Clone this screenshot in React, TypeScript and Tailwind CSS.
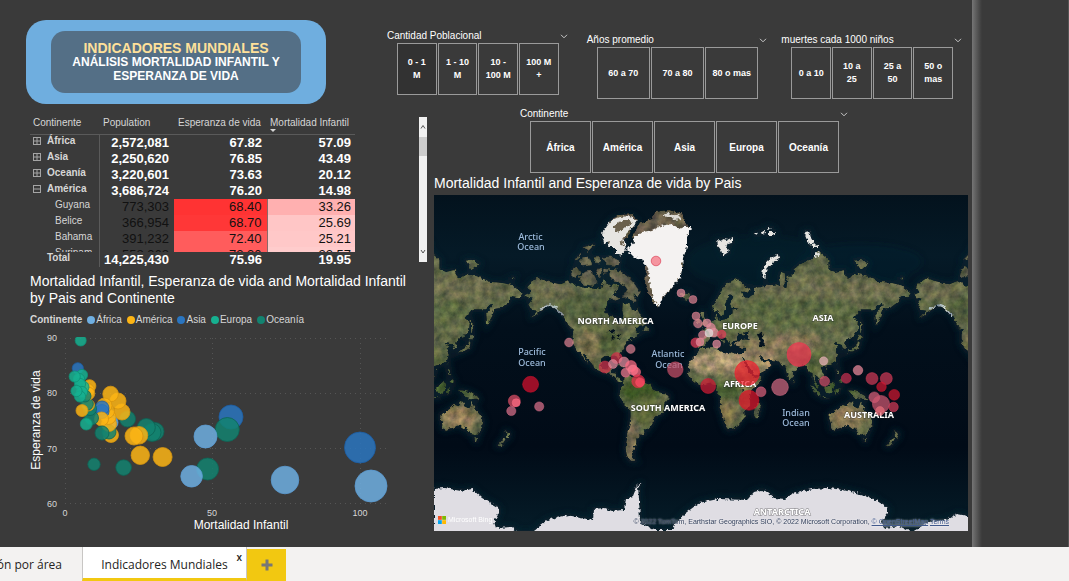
import React from 'react';

const arial = "font-['Liberation_Sans',Arial,sans-serif]";

/* ---------- slicers ---------- */

function Chevron() {
  return (
    <svg viewBox="0 0 8 5" className="h-[5px] w-2" fill="none" stroke="#c8c8c8" strokeWidth="1">
      <path d="M1 0.8 L4 3.8 L7 0.8" />
    </svg>
  );
}

type SlicerProps = { title: string; options: string[]; big?: boolean; activeFirst?: boolean };

function Slicer({ title, options, big, activeFirst }: SlicerProps) {
  return (
    <section aria-label={title}>
      <header className="flex h-[14px] items-center justify-between text-[10px] leading-3 text-white">
        <h2>{title}</h2>
        <button type="button" aria-label={`Opciones de ${title}`} className="pt-px">
          <Chevron />
        </button>
      </header>
      <div className={`flex gap-px pl-[10px] pr-[9px] ${big ? 'text-[10px]' : 'text-[9px]'}`}>
        {options.map((o, i) => (
          <button
            key={o}
            type="button"
            className={`h-[52px] flex-1 basis-0 whitespace-pre-line border border-[#9a9a9a] font-bold leading-[13px] text-white ${
              activeFirst && i === 0 ? 'bg-[#323232]' : ''
            }`}
          >
            {o}
          </button>
        ))}
      </div>
    </section>
  );
}

/* ---------- matrix ---------- */

const groups = [
  ['África', '2,572,081', '67.82', '57.09', '+'],
  ['Asia', '2,250,620', '76.85', '43.49', '+'],
  ['Oceanía', '3,220,601', '73.63', '20.12', '+'],
  ['América', '3,686,724', '76.20', '14.98', '-'],
];
const countries = [
  ['Guyana', '773,303', '68.40', '33.26', 'bg-[#ff3333]', 'bg-[#ffb0b0]'],
  ['Belice', '366,954', '68.70', '25.69', 'bg-[#ff3737]', 'bg-[#ffc6c6]'],
  ['Bahama', '391,232', '72.40', '25.21', 'bg-[#ff5c5c]', 'bg-[#ffc8c8]'],
  ['Surinam', '558,368', '72.30', '22.57', 'bg-[#ff5c5c]', 'bg-[#ffcccc]'],
];

function Expander({ open }: { open: boolean }) {
  return (
    <svg viewBox="0 0 8 8" className="h-2 w-2" fill="none" stroke="#a5a5a5" strokeWidth="1">
      <rect x="0.5" y="0.5" width="7" height="7" />
      <path d={open ? 'M1 4h6' : 'M1 4h6M4 1v6'} />
    </svg>
  );
}

function Matrix() {
  return (
    <div className="flex items-start justify-between">
      <table className="w-[325px] table-fixed border-collapse text-[#d6d6d6]">
        <colgroup>
          <col className="w-[69px]" />
          <col className="w-[75px]" />
          <col className="w-[93px]" />
          <col className="w-[88px]" />
        </colgroup>
        <thead>
          <tr className="border-b border-[#5a5a5a] text-left text-[10px] leading-3">
            <th className="h-[17px] p-0 pl-[3px] align-top font-normal">Continente</th>
            <th className="p-0 pl-1 align-top font-normal">Population</th>
            <th className="whitespace-nowrap p-0 pl-1 align-top font-normal">Esperanza de vida</th>
            <th className="whitespace-nowrap p-0 pl-[3px] align-top font-normal">
              <div className="h-[17px]">
                Mortalidad Infantil
                <svg viewBox="0 0 6 3" className="h-[3px] w-[6px]">
                  <path d="M0 0h6L3 3z" fill="#d6d6d6" />
                </svg>
              </div>
            </th>
          </tr>
        </thead>
        <tbody>
          {groups.map((g) => (
            <tr key={g[0]} className="text-right text-[13px] font-bold leading-4 text-white">
              <th className="border-r border-[#5a5a5a] p-0">
                <div className="flex h-4 items-center gap-[6px] pb-1 pl-[3px] text-[10px] leading-3 text-[#d6d6d6]">
                  <button type="button" aria-label={`Expandir ${g[0]}`}>
                    <Expander open={g[4] === '-'} />
                  </button>
                  {g[0]}
                </div>
              </th>
              <td className="p-0 pr-[5px]">{g[1]}</td>
              <td className="p-0 pr-[5px]">{g[2]}</td>
              <td className="p-0 pr-1">{g[3]}</td>
            </tr>
          ))}
          {countries.map((c, i) => {
            const h = i === 3 ? 'h-[5px]' : 'h-4';
            return (
              <tr key={c[0]} className="text-right text-[13px] leading-4 text-[#111111]">
                <th className="border-r border-[#5a5a5a] p-0 text-left text-[10px] font-normal leading-3 text-[#d6d6d6]">
                  <div className={`${h} overflow-hidden pl-[25px]`}>{c[0]}</div>
                </th>
                <td className="p-0">
                  <div className={`${h} overflow-hidden pr-[5px]`}>{c[1]}</div>
                </td>
                <td className={`p-0 ${c[4]}`}>
                  <div className={`${h} overflow-hidden pr-[5px]`}>{c[2]}</div>
                </td>
                <td className={`border-l border-[#8a6a6a] p-0 ${c[5]}`}>
                  <div className={`${h} overflow-hidden pr-1`}>{c[3]}</div>
                </td>
              </tr>
            );
          })}
        </tbody>
        <tfoot>
          <tr className="text-right text-[13px] font-bold leading-[15px] text-white">
            <th className="border-r border-[#5a5a5a] p-0 text-left text-[10px] leading-3 text-[#d6d6d6]">
              <div className="h-[15px] pl-[17px]">Total</div>
            </th>
            <td className="p-0 pr-[5px]">14,225,430</td>
            <td className="p-0 pr-[5px]">75.96</td>
            <td className="p-0 pr-1">19.95</td>
          </tr>
        </tfoot>
      </table>
      <div className="flex h-[145px] w-2 flex-col items-center bg-[#f1f1f1]">
        <svg viewBox="0 0 8 20" className="h-5 w-2" fill="none" stroke="#555555">
          <path d="M2 11.5L4 8.5L6 11.5" />
        </svg>
        <div className="h-[19px] w-full bg-[#cdcdcd]" />
        <div className="flex-1" />
        <svg viewBox="0 0 8 16" className="h-4 w-2" fill="none" stroke="#555555">
          <path d="M2 4L4 7L6 4" />
        </svg>
      </div>
    </div>
  );
}

/* ---------- scatter ---------- */

const palette: Record<string, [string, string]> = {
  f: ['#6fafe2', '#5a9ad2'],
  a: ['#fdb515', '#d8960f'],
  s: ['#2a75c0', '#1c5da3'],
  e: ['#16b090', '#0f8f75'],
  o: ['#138370', '#0c6455'],
};
const legend: [string, string][] = [
  ['África', 'f'],
  ['América', 'a'],
  ['Asia', 's'],
  ['Europa', 'e'],
  ['Oceanía', 'o'],
];

/* kind, x, y, radius */
const points: [string, number, number, number][] = [
  ['s', 231, 417, 12], ['s', 360, 447.5, 15.5], ['o', 227.3, 429.5, 12], ['f', 205.5, 436.5, 11.5],
  ['o', 207.6, 469, 11], ['f', 191.6, 476.3, 10.8], ['f', 285, 480, 13.8], ['f', 371, 486, 16],
  ['a', 162.6, 457, 9.5], ['a', 140.3, 455.3, 9.2], ['o', 94, 464.3, 6.2], ['o', 123.6, 467.6, 7.8],
  ['o', 155, 431.5, 9], ['o', 152, 432.5, 9], ['o', 146.3, 427.5, 9], ['a', 139, 435.3, 8.8],
  ['a', 134, 436, 9], ['o', 127.5, 419, 8], ['a', 122, 412, 8], ['a', 118, 401, 8], ['a', 110.6, 394, 7.8],
  ['a', 111, 435, 7.5], ['f', 111, 422.5, 7], ['o', 109, 432, 7], ['a', 109, 424, 7.5], ['a', 108.5, 417, 7.5],
  ['a', 107, 411, 7.5], ['a', 104.5, 405.5, 7.5], ['s', 102, 411.5, 7], ['s', 102, 408, 7], ['a', 101.5, 419, 7],
  ['o', 102, 433, 7], ['o', 91.5, 418, 7], ['o', 90, 409, 6.5], ['a', 88.5, 405, 6], ['o', 87, 404, 6.3],
  ['a', 82, 410.6, 6], ['a', 89.6, 386, 6.3], ['a', 88, 390, 6.3], ['a', 88.5, 393.5, 6.3], ['o', 85, 396, 6],
  ['e', 86.3, 424, 6], ['s', 77.8, 368.3, 5.6], ['e', 82, 375, 5.6], ['e', 79, 379, 5.6], ['e', 83, 387, 6],
  ['e', 80, 384, 5.6], ['e', 82, 392, 5.6], ['e', 80, 396.5, 5.6], ['e', 76.5, 391, 5.6], ['e', 74.7, 376.5, 5.6],
];

function Scatter() {
  return (
    <section className="pt-[6px]">
      <h2 className="w-[390px] text-[14px] leading-[17px] text-white">
        Mortalidad Infantil, Esperanza de vida and Mortalidad Infantil by Pais and Continente
      </h2>
      <ul className="flex items-center gap-[5px] pt-[7px] text-[10px] leading-3 text-[#d6d6d6]">
        <li className="font-bold">Continente</li>
        {legend.map(([name, key]) => (
          <li key={name} className="flex items-center gap-px">
            <svg viewBox="0 0 8 8" className="h-2 w-2">
              <circle cx="4" cy="4" r="4" fill={palette[key][0]} />
            </svg>
            {name}
          </li>
        ))}
      </ul>
      <svg
        viewBox="30 326 390 208"
        className="h-[208px] w-[390px]"
        fontFamily="'Liberation Sans', Arial, sans-serif"
        role="img"
        aria-label="Esperanza de vida y mortalidad infantil"
      >
        <defs>
          <clipPath id="plot">
            <rect x="60" y="337" width="360" height="170" />
          </clipPath>
        </defs>
        <g stroke="#555555" strokeDasharray="1 4">
          {[338, 393, 448, 503].map((y) => (
            <path key={y} d={`M65 ${y + 0.5}H390`} />
          ))}
          {[65, 212, 360].map((x) => (
            <path key={x} d={`M${x + 0.5} 338V503`} />
          ))}
        </g>
        <g fontSize="9" fill="#d6d6d6">
          <g textAnchor="end">
            <text x="57" y="341">90</text>
            <text x="57" y="396">80</text>
            <text x="57" y="452">70</text>
            <text x="57" y="507">60</text>
          </g>
          <g textAnchor="middle">
            <text x="65" y="516">0</text>
            <text x="212" y="516">50</text>
            <text x="360" y="516">100</text>
          </g>
        </g>
        <g fontSize="12" fill="#ffffff" textAnchor="middle">
          <text x="241" y="529">Mortalidad Infantil</text>
          <text transform="translate(40 420) rotate(-90)">Esperanza de vida</text>
        </g>
        <g clipPath="url(#plot)" fillOpacity="0.85">
          {points.map(([k, x, y, r], i) => (
            <circle key={i} cx={x} cy={y} r={r} fill={palette[k][0]} stroke={palette[k][1]} strokeWidth="0.8" />
          ))}
          <circle cx="80.7" cy="340.5" r="5.5" fill={palette.e[0]} stroke={palette.e[1]} strokeWidth="0.8" />
        </g>
      </svg>
    </section>
  );
}

/* ---------- map ---------- */

const WORLD = 389;

/* Mercator projection of "lon,lat lon,lat ..." to a closed path */
function outline(coords: string) {
  return (
    coords
      .trim()
      .split(/\s+/)
      .map((pair, i) => {
        const [lon, lat] = pair.split(',').map(Number);
        const x = 706.5 + (WORLD / 360) * lon;
        const y = 389.5 - (WORLD / (2 * Math.PI)) * Math.log(Math.tan(Math.PI / 4 + (lat * Math.PI) / 360));
        return `${i ? 'L' : 'M'}${x.toFixed(1)} ${y.toFixed(1)}`;
      })
      .join('') + 'Z'
  );
}

const land = [
  // North America
  '-168,65.6 -163,66.5 -166,68.3 -162,70 -156,71.3 -150,70.5 -141,69.7 -135,69.3 -128,70.3 -124,69.6 -115,68.3 -108,68 -102,67.7 -97,68.3 -95,71.5 -92,69.5 -88,68.5 -85,69.5 -81,69 -82,67 -86,66.5 -87,64.5 -93,62 -94.5,59 -92,57 -85,55.3 -82,53 -80,51.3 -79,53 -77,56 -78,59 -77.5,62.3 -73,62 -70,61 -69,58.8 -66,59 -64,60.3 -62,57 -58,54.8 -56,52 -60,50.2 -66,50 -64,48.5 -65,46 -61,46 -66,43.5 -70,43.5 -70,41.7 -74,40.5 -76,37 -76,35 -81,31.5 -80,26 -81,25.2 -83,29 -85,29.8 -90,29.5 -94,29.5 -97.3,27.5 -97.8,22.5 -95.8,18.7 -92,18.5 -90.5,21 -87,21.5 -88.5,16 -84,15.8 -83.3,11 -79.5,9.4 -77.3,8 -80,7.5 -83,8.5 -86,11.5 -88,13 -94,16 -97,15.8 -102,18 -105.5,20.3 -106,23 -109,26 -113,31.3 -114.5,31 -110,24 -109.8,23 -112,25.5 -115,29 -117,32.5 -120.5,34.5 -124,40 -124,46 -123,48.5 -128,51 -131,55 -136,58.5 -141,60 -147,61 -151,59.5 -154,58.5 -158,56.5 -164,54.6 -160,56.5 -157,58.7 -162,59 -165,61.5 -161,64 -166,64.5',
  // South America
  '-77.3,8 -75,10.7 -71.7,12.3 -68,10.8 -62,10.6 -57,6 -51.5,4 -50,0 -44,-2.5 -39,-3.5 -35,-6 -35,-9 -39,-13 -39,-18 -41,-22 -45,-23.5 -48.5,-26 -48.8,-28.5 -52,-33 -54,-35 -58,-34.5 -57,-38 -62,-39 -62.5,-41 -65,-41 -65,-45 -67.5,-46 -66,-48 -69,-51 -68,-53 -65,-55 -70,-55 -74,-52 -75,-47 -73.5,-42 -73.5,-37 -71.5,-32 -70.3,-24 -70.4,-18.3 -76,-14 -79.5,-8 -81.3,-5 -80,-3 -80,1 -77.5,4 -77.5,7',
  // Africa, Madagascar
  '-6,35.8 0,36 10,37.2 11,34 15,32.3 20,31 22,32.8 29,31 32.5,31.2 32.5,29.9 35.5,24 37.3,20 39,16 43,12 44,10.5 51,12 50,8 46,3 41,-2 39,-6 40.5,-11 40.5,-15 35,-20 35.5,-24 32.7,-27 30,-31 25.5,-34 20,-34.8 18.3,-33 16,-28 14.5,-22 12,-17 13.5,-11 12,-5 9,-1 9.5,4 5,4.5 4,6.3 -2,5 -7.5,4.4 -13,8.5 -16.5,12.5 -17.3,14.8 -16,19 -16.8,22 -13,27.5 -9.7,30 -9,33',
  '49.3,-12 50.3,-15.5 47.5,-24.5 45,-25.5 43.5,-22 44.3,-17',
  // Eurasia
  '-9,37 -9,43.3 -1.5,43.5 -1.5,46.5 -4.5,48.3 1.5,50.2 4.5,53 8.5,54 8.3,57 10.5,57.5 10.5,54.3 14,54 19,54.5 21,57 24,57.3 24,59.3 30,60 23,60 21.5,61.5 25,65 22,65.7 17.5,62 18.5,60 16.5,57 14,55.4 12.5,56.5 11,59 7,58 5,61 10,64 14.5,68 20,70 28,71 33,69.5 41,67.3 39,66.2 33,66.8 35,64.5 38,64.5 40.5,65 44,66 43.5,68.5 46,68 53,68.5 60,69 65,69.2 68.5,68.5 67,71 69,73 73,72.5 72,68 74,68 75,72 81,72 80.5,73.7 87,75 98,76.3 104,77.7 113,76 113,73.7 119,73 127,73.5 130,71 139,72.5 150,71.5 160,70 170,69.8 180,69 190,66 187,64.5 180,65 177,62.5 170,60 163.5,59.5 162,56 157,51 156,57 163,61.8 160,61.5 155,59.3 143,59.3 136,55 141,53 140.5,48 135,43.5 130,42.5 127.5,39.5 129.5,36 126.5,34.5 125,38 121.5,39 121,40.8 118,39 122.3,37 119.5,35 121.8,31 120,26 114,22.3 108.5,21.5 106,19 109,13 108,11 105,9 102.5,12 100.5,13.3 99.5,10 103.5,3 103.5,1.4 101,3 98.3,8.5 98,15 94.5,16 92,22 87,21.3 80.3,15.5 80,11 77.5,8 74,15 72.7,21 70,21 67,25 61,25.2 57,26.5 51,28 48,30 50,27 51.5,25 54,24.2 56.3,26 59.8,22.5 55,17.5 52,16 45,12.8 43,14 42.5,16.5 39,21 35,28 32.5,30 32.5,31.2 34.3,31.3 35.8,36 30.5,36.3 27.3,37 26.3,40 29,41.2 35,42 41,41.5 38,44.5 39,47 35,46.3 36,45 33.5,44.5 33,46 30.5,46.3 28,43.5 28.5,41.3 24,40.7 23,39 24,38 22.5,36.5 19.5,41 13.8,45 12.3,45 13,43 18.3,40 16,38 15.5,40 10.5,43.5 4,43.5 3,42 0,39.5 -1,37.5 -5.5,36',
  // British Isles, Iceland
  '-5.5,50 1,51 1.5,52.8 -2,55.5 -2,57.5 -4,58.6 -6,57 -3,54 -5,52',
  '-10,52 -6,52.3 -6,54.5 -8,55.2 -10,54',
  '-24,65.5 -22,66.4 -16,66.3 -14,65 -18,63.5 -22,64',
  // Japan, Sakhalin, Taiwan, Hainan
  '130,31.5 131.5,34 136,35.7 139.5,38.5 140,41.3 142,39.5 140.5,35.5 136,33.6 132,32.5',
  '140,42 141.7,45.4 145,43.5 143,42',
  '142,46 142,54 143.3,53 144,49 143,46.5',
  '120.2,23 121.5,25 120.9,22',
  '108.7,19 110.8,20 110,18.4',
  // Maritime South-East Asia
  '95.5,5.5 98,4 104,-2 106,-5.8 102,-4.5 98.5,1.5',
  '109,1.5 113,3.2 117,7 119,5 117.5,1 116,-4 110.5,-3',
  '105.5,-6.5 110,-6.8 114.5,-8.2 108,-7.7',
  '119,-5.3 119.5,0.5 124.8,1.3 121,0.2 123,-1 121.5,-3 122.5,-5.3 120.5,-3',
  '131,-0.8 134,-1 137.5,-1.6 141,-2.6 147,-6 150.5,-10.5 146,-8.5 142.5,-9.2 138,-8 134,-4',
  '120.5,18.3 122.2,18.3 121.7,14.5 124,12.8 120.7,13.7',
  '122,7 125,9.5 126.5,7.5 125.3,6',
  '80,9.6 81.8,7.3 80.3,6',
  // Australia, Tasmania, New Zealand
  '114,-22 117,-20.6 122,-18 126,-14 129,-15 132,-11.5 136.7,-12.2 135.5,-15 140.5,-17.5 142.5,-11 145.5,-15 147,-19.3 151,-23.5 153.5,-28 152.5,-32.5 150,-37.3 146.5,-39 140.5,-38 138,-34.5 137.5,-33 135.5,-34.7 131,-31.5 124,-33.5 118,-35 115,-34 115.5,-31 113.5,-26',
  '145,-40.8 148.2,-41 147,-43.6 145.7,-43',
  '173,-34.5 175.5,-36.5 178.5,-37.8 176.5,-41.3 174,-39.5 174.7,-37.5',
  '172.7,-40.6 174.2,-41.7 170.8,-45.8 168.5,-46.6 166.5,-46',
  // Caribbean, Newfoundland
  '-84.5,22.3 -82,23.1 -77,21.5 -74.3,20.2 -77.5,19.9 -80,21.5',
  '-74.3,18.5 -73,19.9 -68.5,18.8 -70,18.3',
  '-59,47.7 -55.7,51.5 -53,47.5',
  '-128,50.7 -123.5,48.4 -126,49',
  // Siberian islands
  '179,71.2 182,71.5 181,70.9',
  '137,75.8 143,76 150,75.1 143,73.4',
].map(outline);

const tundra = [
  // Canadian Arctic
  '-124,73.5 -120,74.4 -116,72.8 -121,71.3 -125,72',
  '-118,71.5 -112,73 -106,73.2 -101,70 -104,68.8 -115,69.3',
  '-90,73.7 -84,73.6 -78,72.8 -72,71.3 -67,69.5 -62,66.7 -64,65 -68,66.3 -65,63 -68,62.7 -74,64.6 -78,64.5 -73,67.5 -76,69 -81,70 -89,71',
  '-100,73.8 -97,74 -98,71.4 -102,72.3',
  '-95,74 -90.5,73.9 -92,72.7 -95.5,72.5',
  '-117,76 -109,76.7 -106,75 -115,74.7',
  '-103,76.5 -99,76.5 -98,75.2 -104,75.3',
  '-97,76.5 -88,76.6 -80,75.6 -82,74.6 -92,74.8',
  '-87,65.7 -81,64 -84,62.8 -87,63.8',
  '-122,76 -116,77.4 -119,75.8',
  '-114,78.5 -104,79 -110,77.7',
].map(outline);

const snow = [
  // Ellesmere and Axel Heiberg
  'M602 234L607 226L612 220L619 217L631 216L637 221L633 227L628 231L624 238L626 249L620 256L616 254L616 247L608 247L610 241L604 243Z',
  // Svalbard
  'M717 240L721 242L723 239L727 240L733 237L733 242L728 243L726 247L730 251L727 253L723 256L721 250L718 246Z',
  // Franz Josef Land
  'M755 233L758 234L756 236ZM761 231L765 230L766 233L762 234ZM768 227L771 228L768 230ZM769 232L775 232L773 235L769 235Z',
  // Severnaya Zemlya
  'M804 232L809 231L811 238L814 243L810 245L807 239ZM812 245L818 244L818 248L813 248ZM815 253L819 251L820 255L815 257Z',
  // Novaya Zemlya
  'M778 255L779 258L772 263L767 269L765 274L766 279L762 276L763 269L767 262L773 257Z',
];

const lakes = [
  '47,45 51,47 53,45 51,43 54,41 53.5,37 49,37.5 49,41',
  '-92,46.7 -87,48.8 -84.5,46.5 -88,46.8',
  '-88,42 -87,45.5 -85,45.5 -86.5,42',
  '-84,46 -80,45 -82,43.3',
  '-83,41.7 -79,42.8 -81,41.6',
  '32,0.3 34,0.3 33,-2.5',
  '-98,53.8 -97,51 -98.5,52',
].map(outline);

const ice =
  'M434 489L445 488L461 491L472 489L482 498L499 508L499 513L494 522L496 528L512 527L518 532L533 532L547 520L568 515L580 518L593 520L594 509L604 508L612 511L624 510L626 499L632 497L636 487L642 482L638 488L639 498L640 522L654 530L671 530L683 515L699 503L718 499L747 500L754 492L762 490L768 492L775 498L785 499L792 494L812 489L829 488L843 490L860 494L874 499L888 508L888 513L881 522L884 528L900 526L912 532L929 522L946 520L957 514L968 516V540H434Z';

/* x, y, rx, ry, colour */
const climate: [number, number, number, number, string][] = [
  [722, 362, 38, 12, '#ab9873'], [762, 360, 16, 13, '#a08c68'], [765, 346, 34, 8, '#8c7f5c'],
  [795, 342, 26, 8, '#927f5b'], [722, 391, 20, 9, '#4a6031'], [640, 391, 20, 12, '#3f5a28'],
  [645, 410, 12, 16, '#5f6b3a'], [633, 440, 6, 20, '#84745a'], [588, 346, 12, 16, '#7e7450'],
  [609, 342, 10, 14, '#55633a'], [848, 417, 18, 12, '#95805a'], [724, 413, 12, 12, '#877850'],
  [590, 308, 34, 13, '#57633f'], [800, 312, 58, 16, '#616e44'], [830, 288, 80, 12, '#6e7050'],
  [818, 362, 14, 12, '#5f6c40'], [552, 290, 22, 8, '#6e6e50'], [836, 388, 26, 10, '#466033'],
  [748, 388, 8, 14, '#76734a'], [732, 325, 20, 8, '#5f6d43'],
];

/* x, y, radius, fill */
const bubbles: [number, number, number, string][] = [
  [656, 261, 4.8, '#f5707f'], [681, 293, 4, '#e58c9c'], [693, 299.5, 4, '#d9808f'],
  [696, 316, 4, '#d9808f'], [698, 323.5, 4.4, '#d9808f'], [695.7, 342.7, 4.8, '#e8405a'],
  [700, 342, 4, '#e58c9c'], [702.7, 335, 4.2, '#d9808f'], [707, 323, 4, '#e58c9c'], [711, 327.7, 4.4, '#e58c9c'],
  [714, 332.7, 4.4, '#e58c9c'], [709, 333, 4, '#e0dcdc'], [721.7, 334.3, 4.2, '#e04058'],
  [716.7, 344, 4, '#e58c9c'], [569, 342.5, 4.4, '#d9808f'], [630.7, 349, 4.4, '#d9808f'],
  [616.7, 358, 5.5, '#d2304a'], [605, 367, 6, '#d2304a'], [613, 364, 4.5, '#e58c9c'], [624, 362, 5, '#e58c9c'],
  [631, 366, 5.5, '#ff6c84'], [633, 370, 5, '#ff7c92'], [636, 372, 4.6, '#ff6c84'], [625.6, 372.7, 4.5, '#f27c90'],
  [638.3, 381.3, 6.5, '#e8304a'], [640, 382.3, 4.4, '#ff4c68'], [675.3, 369.6, 7.8, '#c85068'],
  [530.6, 384.3, 8, '#d8102e'], [514.3, 401, 6, '#e05068'], [516.2, 402.7, 4, '#ff6c84'],
  [511.3, 411, 4.6, '#d9708a'], [539.2, 406.5, 4.6, '#d9708a'], [708.2, 386, 7.5, '#d01c34'],
  [747.2, 373, 12.4, '#f0202e'], [749, 400.3, 10, '#e01428'], [761, 391.8, 5, '#d9607a'],
  [780, 387.2, 8.4, '#cf6880'], [799, 354.5, 12, '#f03550'], [823.7, 361, 4.2, '#e8b0b8'],
  [824.6, 381.3, 5, '#d05068'], [846.3, 378.3, 5, '#c83050'], [858, 370.3, 4.8, '#ef8c9c'],
  [872, 378.6, 6, '#d03a56'], [886.3, 378.6, 6, '#d03a56'], [881.5, 386.8, 4.8, '#d01830'],
  [894.2, 394.8, 5.4, '#d01830'], [874.3, 397.3, 5.4, '#d9607a'], [881, 404, 8.6, '#cf5870'],
  [893.5, 407, 4.8, '#d03a56'], [880, 411, 4.4, '#e9707c'],
];

const copies = [-WORLD, 0, WORLD];

function WorldMap() {
  return (
    <div className="relative">
      <svg
        viewBox="434 195 534 336"
        className="block h-auto w-full"
        role="img"
        aria-label="Mortalidad Infantil and Esperanza de vida by Pais"
      >
        <defs>
          <linearGradient id="sea" x1="0" y1="0" x2="0" y2="1">
            <stop offset="0" stopColor="#03121d" />
            <stop offset="0.18" stopColor="#051a27" />
            <stop offset="0.4" stopColor="#020f1b" />
            <stop offset="0.75" stopColor="#010b17" />
            <stop offset="1" stopColor="#051c28" />
          </linearGradient>
          <filter id="soft" x="-20%" y="-20%" width="140%" height="140%">
            <feGaussianBlur stdDeviation="3" />
          </filter>
          <filter id="terrain" filterUnits="userSpaceOnUse" x="434" y="195" width="534" height="336" colorInterpolationFilters="sRGB">
            <feTurbulence type="fractalNoise" baseFrequency="0.25" numOctaves="2" seed="4" result="edge" />
            <feDisplacementMap in="SourceGraphic" in2="edge" scale="4" xChannelSelector="R" yChannelSelector="G" result="shape" />
            <feTurbulence type="fractalNoise" baseFrequency="0.12" numOctaves="4" seed="9" />
            <feColorMatrix values="1 0 0 0 0  0.8 0.2 0 0 0  0.7 0 0.3 0 0  0 0 0 0 1" result="grain" />
            <feComposite in="shape" in2="grain" operator="arithmetic" k1="0.9" k2="0.5" result="lit" />
            <feComposite in="lit" in2="shape" operator="in" />
          </filter>
          <filter id="rough" filterUnits="userSpaceOnUse" x="434" y="195" width="534" height="345" colorInterpolationFilters="sRGB">
            <feTurbulence type="fractalNoise" baseFrequency="0.3" numOctaves="2" seed="7" />
            <feDisplacementMap in="SourceGraphic" scale="5" xChannelSelector="R" yChannelSelector="G" />
          </filter>
          <clipPath id="coast">
            {land.map((d, i) => (
              <path key={i} d={d} />
            ))}
          </clipPath>
          <g id="shelf">
            {[...land, ...tundra, ...snow].map((d, i) => (
              <path key={i} d={d} />
            ))}
          </g>
          <g id="ground">
            <g fill="#666e4b">
              {land.map((d, i) => (
                <path key={i} d={d} />
              ))}
            </g>
            <g clipPath="url(#coast)">
              <g filter="url(#soft)">
                {climate.map(([x, y, rx, ry, fill], i) => (
                  <ellipse key={i} cx={x} cy={y} rx={rx} ry={ry} fill={fill} />
                ))}
              </g>
            </g>
            <g fill="#66664f" stroke="#66664f" strokeWidth="0.8">
              {tundra.map((d, i) => (
                <path key={i} d={d} />
              ))}
            </g>
            <g fill="#04131f">
              {lakes.map((d, i) => (
                <path key={i} d={d} />
              ))}
            </g>
            <path d="M540 309L549 305L556 308L563 316" fill="none" stroke="#b9c4c6" strokeWidth="1.6" />
          </g>
          <g id="snow" fill="#e6e5e1">
            {snow.map((d, i) => (
              <path key={i} d={d} />
            ))}
          </g>
        </defs>
        <rect x="434" y="195" width="534" height="336" fill="url(#sea)" />
        <g filter="url(#soft)" fill="#0a2633" stroke="#0a2633" strokeWidth="5" opacity="0.75">
          {copies.map((dx) => (
            <use key={dx} href="#shelf" x={dx} />
          ))}
          <path d={ice} />
          <ellipse cx="760" cy="262" rx="70" ry="24" opacity="0.35" />
          <ellipse cx="860" cy="262" rx="60" ry="16" opacity="0.5" />
        </g>
        <g filter="url(#terrain)">
          {copies.map((dx) => (
            <use key={dx} href="#ground" x={dx} />
          ))}
          <path
            d="M632 237L640 222L652 219L655 212L668 210L681 213L686 222L690 228L684 245L682 272L672 288L664 296L658 307L652 300L645 285L646 262Z"
            fill="#6a604c"
          />
          <path d="M606 232L610 222L618 215L632 214L637 220L628 236L620 246L610 246Z" fill="#6a604c" />
        </g>
        <g filter="url(#rough)">
          {copies.map((dx) => (
            <use key={dx} href="#snow" x={dx} />
          ))}
          <path d="M613 227L619 222L628 220L633 223L625 227L618 233ZM620 244L622 238L624 246Z" fill="#6a604c" />
          <path d="M662 216L668 213L678 215L682 219L674 220L668 217Z" fill="#dcdad4" />
          <path
            d="M627 250L634 242L633 238L642 232L652 230L660 226L672 224L680 229L684 227L692 227L687 236L687 248L683 258L681 276L672 288L664 295L659 307L654 301L650 288L648 268L642 259L634 257Z"
            fill="#f4f2f1"
          />
        </g>
        <path d={ice} fill="#dfdde3" filter="url(#rough)" />

        <g
          fontFamily="'Noto Sans', 'Open Sans', sans-serif"
          textAnchor="middle"
          fontSize="9"
          fontWeight="700"
          fill="#ffffff"
          stroke="#222222"
          strokeOpacity="0.5"
          strokeWidth="1"
          paintOrder="stroke"
        >
          <text x="615.5" y="324">NORTH AMERICA</text>
          <text x="740" y="329">EUROPE</text>
          <text x="823" y="321">ASIA</text>
          <text x="740" y="387">AFRICA</text>
          <text x="668" y="411">SOUTH AMERICA</text>
          <text x="869" y="418">AUSTRALIA</text>
          <text x="782" y="515">ANTARCTICA</text>
        </g>
        <g
          fontFamily="'Noto Sans', 'Open Sans', sans-serif"
          textAnchor="middle"
          fontSize="9"
          fontWeight="500"
          fill="#9dbbdc"
        >
          <text x="530.5" y="240">Arctic</text>
          <text x="531" y="250">Ocean</text>
          <text x="532" y="355">Pacific</text>
          <text x="532" y="366">Ocean</text>
          <text x="668" y="357">Atlantic</text>
          <text x="669" y="368">Ocean</text>
          <text x="796" y="416">Indian</text>
          <text x="796" y="426">Ocean</text>
        </g>
        <g fillOpacity="0.72" strokeOpacity="0.6" strokeWidth="0.8">
          {bubbles.map(([x, y, r, fill], i) => (
            <circle key={i} cx={x} cy={y} r={r} fill={fill} stroke={i === 0 ? '#d0102c' : fill} />
          ))}
        </g>
      </svg>
      <div className="absolute bottom-[6px] left-1 flex items-center gap-[2px] text-[7px] leading-[10px] text-white">
        <svg viewBox="0 0 8 8" className="h-2 w-2">
          <path d="M0 0h3.8v3.8H0z" fill="#f25022" />
          <path d="M4.2 0H8v3.8H4.2z" fill="#7fba00" />
          <path d="M0 4.2h3.8V8H0z" fill="#00a4ef" />
          <path d="M4.2 4.2H8V8H4.2z" fill="#ffb900" />
        </svg>
        Microsoft Bing
      </div>
      <p className="absolute bottom-1 right-[19px] whitespace-nowrap text-[7px] leading-[10px] text-[#33405c] [text-shadow:0_0_2px_#ffffff]">
        © 2022 TomTom, Earthstar Geographics SIO, © 2022 Microsoft Corporation,{' '}
        <a href="#osm" className="text-[#41598c] underline">© OpenStreetMap</a>{' '}
        <a href="#terms" className="text-[#41598c] underline">Terms</a>
      </p>
    </div>
  );
}

/* ---------- page ---------- */

export default function App() {
  return (
    <div className={`flex min-h-screen flex-col bg-[#3a3a3a] ${arial}`}>
      <main className="flex flex-1">
        <div className="min-w-0 flex-1">
          <div className="flex items-start pl-[26px] pt-5">
            <div className="w-[300px] rounded-[20px] bg-[#6faedf] px-[25px] py-[11px]">
              <h1 className="rounded-[14px] bg-[#546f86] pb-[10px] pt-[10px] text-center text-[12px] font-bold leading-[14px] text-white">
                <span className="block text-[14px] text-[#fee09a]">INDICADORES MUNDIALES</span>
                ANÁLISIS MORTALIDAD INFANTIL Y
                <br />
                ESPERANZA DE VIDA
              </h1>
            </div>
            <div className="ml-[61px] flex flex-1 items-start pr-[10px] pt-[9px]">
              <div className="flex-1">
                <Slicer title="Cantidad Poblacional" activeFirst options={['0 - 1\nM', '1 - 10\nM', '10 -\n100 M', '100 M\n+']} />
              </div>
              <div className="ml-[19px] flex-1 pt-1">
                <Slicer title="Años promedio" options={['60 a 70', '70 a 80', '80 o mas']} />
              </div>
              <div className="ml-[14px] flex-1 pt-1">
                <Slicer title="muertes cada 1000 niños" options={['0 a 10', '10 a\n25', '25 a\n50', '50 o\nmas']} />
              </div>
            </div>
          </div>
          <div className="flex items-start">
            <div className="w-[427px] shrink-0 pl-[30px] pt-[13px]">
              <Matrix />
              <Scatter />
            </div>
            <div className="ml-[7px] min-w-0 flex-1 pr-1 pt-[3px]">
              <div className="ml-[86px] w-[328px]">
                <Slicer title="Continente" big options={['África', 'América', 'Asia', 'Europa', 'Oceanía']} />
              </div>
              <h2 className="pb-[2px] text-[14px] leading-5 text-white">
                Mortalidad Infantil and Esperanza de vida by Pais
              </h2>
              <WorldMap />
            </div>
          </div>
        </div>
        <aside className="w-[97px] shrink-0 border-r border-[#555555] bg-linear-to-r from-[#757575] to-[#3a3a3a] to-[10px]" />
      </main>
      <nav className="flex h-[34px] items-stretch bg-[#f3f2f1] font-['Open_Sans','Noto_Sans',sans-serif] text-[12px] text-[#252423]">
        <button type="button" className="flex w-[82px] justify-end overflow-hidden whitespace-nowrap pr-5 pt-[9px] leading-[18px]">
          ión por área
        </button>
        <div className="relative flex w-[165px] border-x border-b-[3px] border-x-[#c8c6c4] border-b-[#f2c811] bg-white">
          <button type="button" className="flex-1 pb-1 pt-2 leading-[18px]">
            Indicadores Mundiales
          </button>
          <button type="button" aria-label="Cerrar pestaña" className="absolute right-1 top-1 text-[10px] font-semibold leading-3">
            x
          </button>
        </div>
        <button type="button" aria-label="Nueva página" className="mt-[2px] flex w-[39px] items-center justify-center bg-[#f2c811]">
          <svg viewBox="0 0 12 12" className="h-3 w-3" stroke="#777777" strokeWidth="3">
            <path d="M6 0.5V11.5M0.5 6H11.5" />
          </svg>
        </button>
      </nav>
    </div>
  );
}
